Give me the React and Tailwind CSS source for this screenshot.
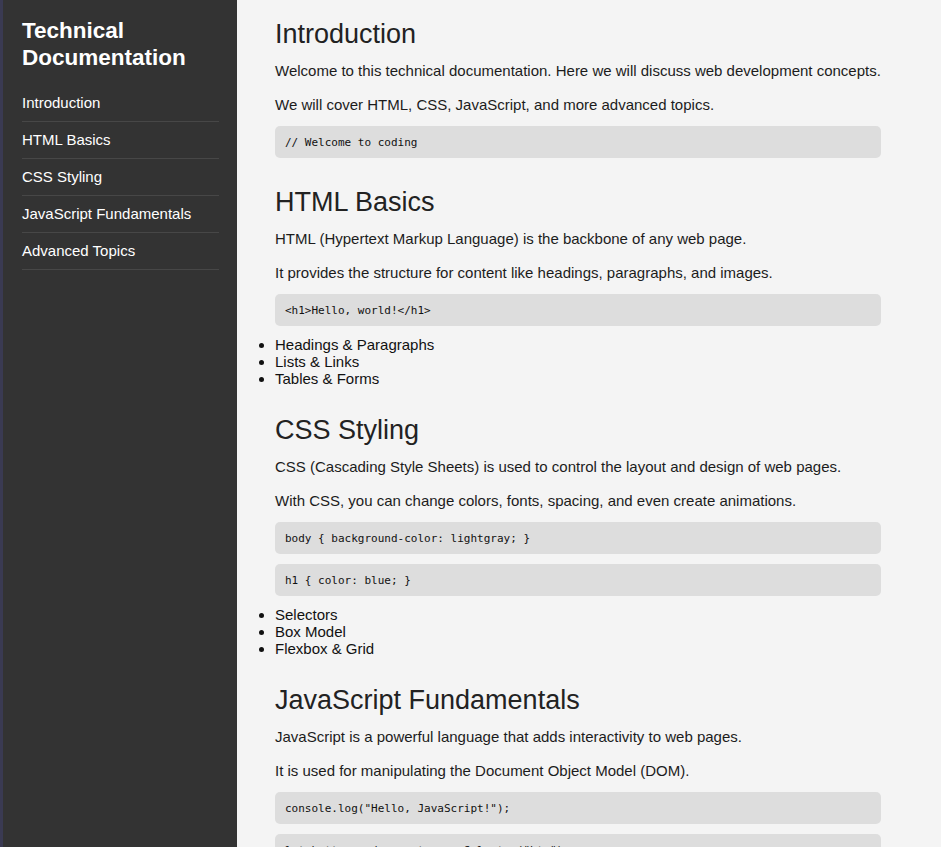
import React from 'react';

const navItems = ['Introduction', 'HTML Basics', 'CSS Styling', 'JavaScript Fundamentals', 'Advanced Topics'];

const sections = [
  {
    title: 'Introduction',
    paras: [
      'Welcome to this technical documentation. Here we will discuss web development concepts.',
      'We will cover HTML, CSS, JavaScript, and more advanced topics.',
    ],
    code: ['// Welcome to coding'],
    list: [],
  },
  {
    title: 'HTML Basics',
    paras: [
      'HTML (Hypertext Markup Language) is the backbone of any web page.',
      'It provides the structure for content like headings, paragraphs, and images.',
    ],
    code: ['<h1>Hello, world!</h1>'],
    list: ['Headings & Paragraphs', 'Lists & Links', 'Tables & Forms'],
  },
  {
    title: 'CSS Styling',
    paras: [
      'CSS (Cascading Style Sheets) is used to control the layout and design of web pages.',
      'With CSS, you can change colors, fonts, spacing, and even create animations.',
    ],
    code: ['body { background-color: lightgray; }', 'h1 { color: blue; }'],
    list: ['Selectors', 'Box Model', 'Flexbox & Grid'],
  },
  {
    title: 'JavaScript Fundamentals',
    paras: [
      'JavaScript is a powerful language that adds interactivity to web pages.',
      'It is used for manipulating the Document Object Model (DOM).',
    ],
    code: ['console.log("Hello, JavaScript!");', 'let button = document.querySelector("btn");'],
    list: ['Variables & Functions', 'Events', 'DOM Manipulation'],
  },
];

function Section({ s }) {
  return (
    <section className="mb-[28px]">
      <h2 className="text-[27px] leading-[32px] font-normal text-[#222] mb-[12px]">{s.title}</h2>
      <p className="text-[15px] leading-[18px] mb-[16px]">{s.paras[0]}</p>
      <p className="text-[15px] leading-[18px] mb-[12px]">{s.paras[1]}</p>
      {s.code.map(c => (
        <pre
          key={c}
          className="bg-[#dddddd] rounded-[5px] px-[10px] pt-[11px] pb-[9px] mb-[10px] text-[11px] leading-[12px] text-[#111] font-['DejaVu_Sans_Mono',monospace]"
        >
          {c}
        </pre>
      ))}
      {s.list.length > 0 && (
        <ul className="list-disc text-[15px] leading-[17px] -mb-[1px] text-[#111]">
          {s.list.map(li => <li key={li}>{li}</li>)}
        </ul>
      )}
    </section>
  );
}

export default function App() {
  return (
    <div className="flex min-h-screen font-['Liberation_Sans',Arial,sans-serif] bg-[#f4f4f4] text-[#1c1c1c]">
      <aside className="w-[237px] shrink-0 bg-[#333333] border-l-[3px] border-[#3a3a52] pl-[19px] pr-[18px] pt-[18px]">
        <h1 className="text-[22.5px] leading-[26.5px] font-bold text-white mb-[14px]">
          Technical
          <br />
          Documentation
        </h1>
        <nav className="flex flex-col">
          {navItems.map(item => (
            <a
              key={item}
              href={'#' + item}
              className="block text-white text-[15px] leading-[16px] py-[10px] border-b border-[#474747]"
            >
              {item}
            </a>
          ))}
        </nav>
      </aside>
      <main className="flex-1 pl-[38px] pt-[18px]">
        <div className="w-[606px]">
          {sections.map(s => <Section key={s.title} s={s} />)}
        </div>
      </main>
    </div>
  );
}
